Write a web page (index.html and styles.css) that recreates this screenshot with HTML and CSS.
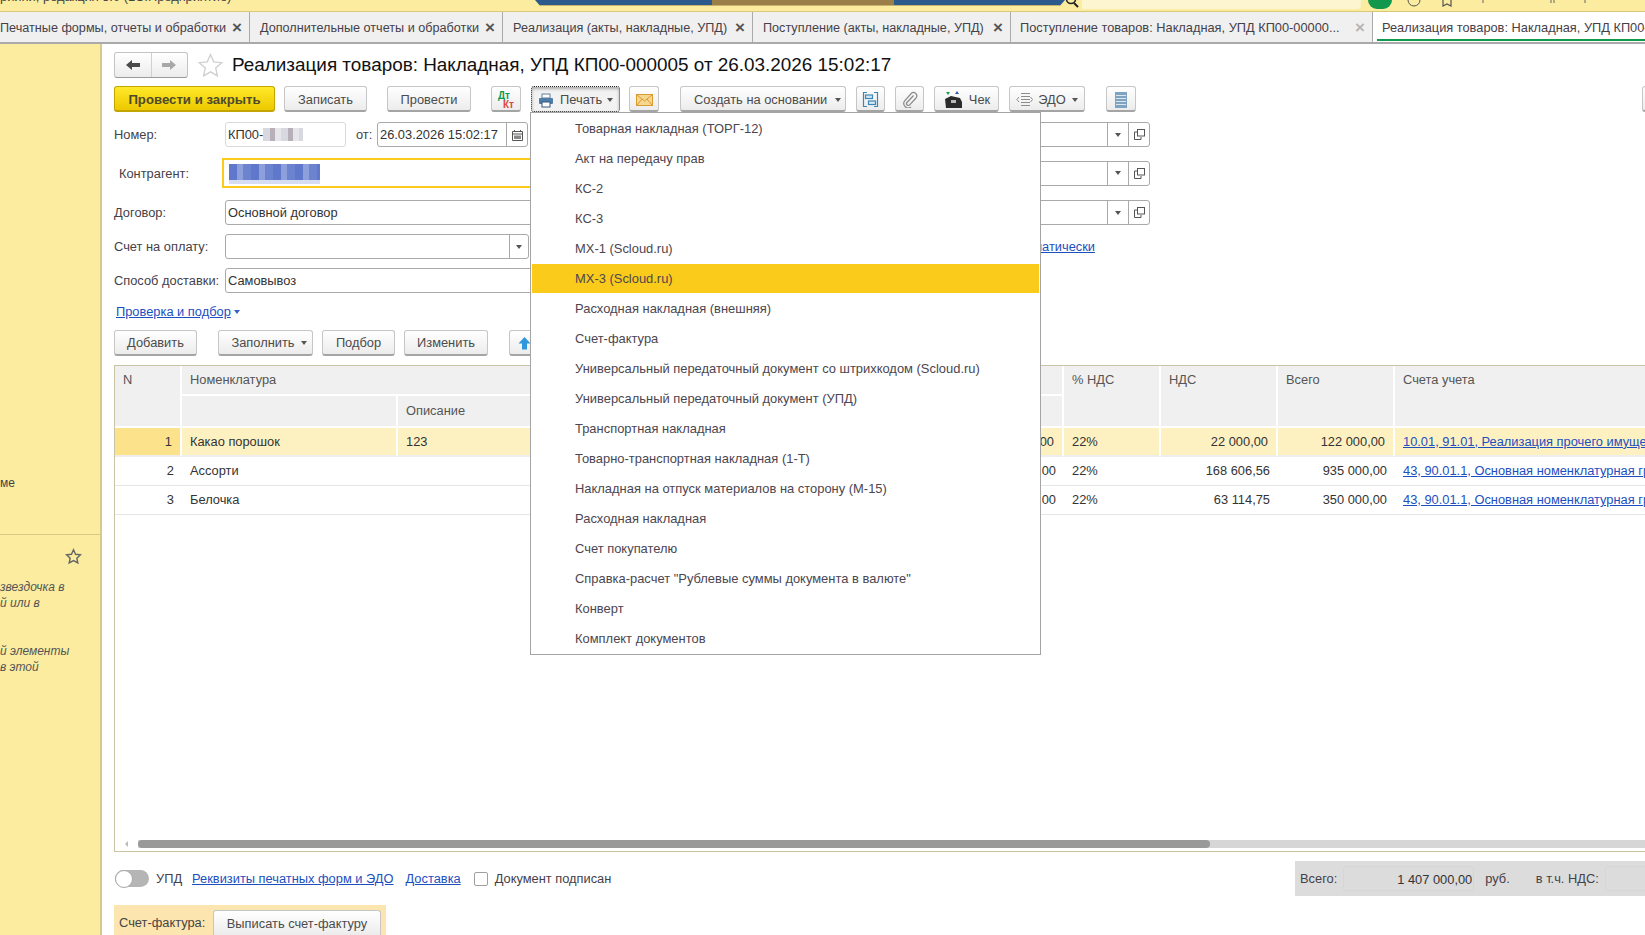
FILE: index.html
```html
<!DOCTYPE html>
<html lang="ru">
<head>
<meta charset="utf-8">
<title>Реализация товаров</title>
<link rel="stylesheet" href="styles.css">
</head>
<body>
<header class="topbar">
  <div class="app-title">рийни, редакция 3.0 (1С:Предприятие)</div>
  <div class="hub"><div class="hub-mid"></div></div>
  <svg class="mag" width="16" height="8" viewBox="0 0 16 8"><circle cx="6" cy="-1" r="4.5" fill="none" stroke="#222" stroke-width="1.6"/><path d="M9 3l4 4" stroke="#222" stroke-width="2"/></svg>
  <div class="search"><span class="search-text">Поиск Ctrl+Shift+F</span></div>
  <div class="top-icons">
    <span class="green-dot"></span>
    <svg width="14" height="8" viewBox="0 0 14 8"><circle cx="7" cy="0" r="6" fill="none" stroke="#555"/></svg>
    <svg width="14" height="8" viewBox="0 0 14 8"><path d="M3 0v6l4-2 4 2V0" fill="none" stroke="#555" stroke-width="1.2"/></svg>
    <svg class="tick" width="4" height="4" viewBox="0 0 4 4"><path d="M2 0v3" stroke="#666"/></svg>
    <svg class="tick2" width="6" height="4" viewBox="0 0 6 4"><path d="M1 0v3M4 0v3" stroke="#666"/></svg>
    <svg class="tick" width="4" height="4" viewBox="0 0 4 4"><path d="M2 0v3" stroke="#666"/></svg>
  </div>
</header>

<nav class="tabs">
  <div class="tab w1"><span class="tab-text">Печатные формы, отчеты и обработки</span><span class="x">×</span></div>
  <div class="tab w2"><span class="tab-text">Дополнительные отчеты и обработки</span><span class="x">×</span></div>
  <div class="tab w3"><span class="tab-text">Реализация (акты, накладные, УПД)</span><span class="x">×</span></div>
  <div class="tab w4"><span class="tab-text">Поступление (акты, накладные, УПД)</span><span class="x">×</span></div>
  <div class="tab w5"><span class="tab-text">Поступление товаров: Накладная, УПД КП00-00000...</span><span class="x faint">×</span></div>
  <div class="tab active"><span class="tab-text">Реализация товаров: Накладная, УПД КП00-000005 от 26.03.2026 15:02:17</span></div>
</nav>

<div class="main">
  <aside class="side">
    <div class="side-top"><span class="side-frag">ме</span></div>
    <div class="side-bottom">
      <svg class="side-star" width="17" height="17" viewBox="0 0 24 24"><path d="M12 2.500l2.900 6.300 6.900.8-5.100 4.700 1.400 6.800-6.100-3.400-6.100 3.400 1.400-6.800-5.100-4.700 6.900-.8z" fill="none" stroke="#666" stroke-width="2"/></svg>
      <p class="side-note">звездочка в<br>й или в</p>
      <p class="side-note">й элементы<br>в этой</p>
    </div>
  </aside>

  <section class="content">
    <div class="title-row">
      <div class="nav-group">
        <span class="nav-btn"><svg width="16" height="12" viewBox="0 0 16 12"><path d="M1 6l6-5v3h8v4H7v3z" fill="#4a4a4a"/></svg></span>
        <span class="nav-btn"><svg width="16" height="12" viewBox="0 0 16 12"><path d="M15 6L9 1v3H1v4h8v3z" fill="#a8a8a8"/></svg></span>
      </div>
      <svg class="title-star" width="25" height="25" viewBox="0 0 24 24"><path d="M12 1.500l3.100 7 7.600.8-5.700 5.100 1.600 7.500L12 18.100l-6.600 3.800L7 14.400 1.300 9.300l7.600-.8z" fill="#fff" stroke="#cfcfcf" stroke-width="1.300"/></svg>
      <h1 class="title">Реализация товаров: Накладная, УПД КП00-000005 от 26.03.2026 15:02:17</h1>
    </div>

    <div class="toolbar">
      <button class="btn primary w-post">Провести и закрыть</button>
      <button class="btn w-save">Записать</button>
      <button class="btn w-do ml20">Провести</button>
      <button class="btn icon w-dt ml20"><span class="dt">Дт</span><span class="kt">Кт</span></button>
      <button class="btn pressed w-print">
        <svg width="16" height="15" viewBox="0 0 16 15"><rect x="4" y="1" width="8" height="4" fill="#fff" stroke="#5f7f9f"/><rect x="1" y="5" width="14" height="6" rx="1" fill="#4e7ea8"/><rect x="4" y="9" width="8" height="5" fill="#fff" stroke="#35577a"/></svg>
        <span>Печать</span><i class="caret"></i>
      </button>
      <button class="btn icon w-mail"><svg width="17" height="12" viewBox="0 0 17 12"><rect x=".5" y=".5" width="16" height="11" fill="#f5d790" stroke="#dd9a2e"/><path d="M1 1l7.500 6L16 1M1 11l5-6M16 11l-5-6" fill="none" stroke="#dd9a2e"/></svg></button>
      <button class="btn w-create ml21">Создать на основании<i class="caret"></i></button>
      <button class="btn icon w-ico"><svg width="17" height="17" viewBox="0 0 17 17" fill="none" stroke="#3d86b8" stroke-width="1.200"><path d="M5 1.500H1.500v14H5M12 1.500h3.500v14H12"/><rect x="3.500" y="4" width="7" height="3.500" fill="#d6e8f3"/><rect x="6.500" y="10" width="7" height="3.500" fill="#d6e8f3"/></svg></button>
      <button class="btn icon w-ico"><svg width="16" height="17" viewBox="0 0 16 17" fill="none" stroke="#8a8a8a" stroke-width="1.200"><path d="M11.500 4.500L5 11.500a1.800 1.800 0 0 0 2.700 2.400L14 7a3.300 3.300 0 0 0-4.800-4.500L2.500 10a4.500 4.500 0 0 0 6.500 6"/></svg></button>
      <button class="btn w-check"><svg width="20" height="18" viewBox="0 0 20 18"><path d="M3 1l4 0-2 3z" fill="#1f9e4b"/><path d="M12 3l2-3 2 3z" fill="#3456b0"/><path d="M2 8l6-3 9 2 2 4v6H3z" fill="#2b2b2b"/><rect x="8" y="9" width="5" height="3" fill="#bbb"/></svg><span>Чек</span></button>
      <button class="btn w-edo"><svg width="17" height="15" viewBox="0 0 17 15" fill="none" stroke="#8c8c8c"><path d="M5 1.500h9M5 4.500h9M5 7.500h9M5 10.500h9M5 13.500h9M3 5L.8 7.500 3 10M14.500 5l2 2.500-2 2.500"/></svg><span>ЭДО</span><i class="caret"></i></button>
      <button class="btn icon w-list"><svg width="12" height="16" viewBox="0 0 12 16"><rect width="12" height="16" fill="#7fa3c0"/><path d="M1 3.500h10M1 6.500h10M1 9.500h10M1 12.500h10" stroke="#dbe7f0" stroke-width="1.200"/></svg></button>
      <button class="btn w-end"></button>
    </div>

    <div class="form">
      <div class="row r-number">
        <label class="lbl">Номер:</label>
        <div class="field soft w-num">КП00-<span class="pix"></span></div>
        <label class="lbl-from">от:</label>
        <div class="field w-date"><span class="f-text">26.03.2026 15:02:17</span><span class="f-btn"><svg width="11" height="12" viewBox="0 0 11 12"><path d="M.5 2.500h10v9H.5zM.5 5h10M2.500 1v2M8.500 1v2" fill="none" stroke="#555"/><path d="M2 6.500h7v3.500H2z" fill="#888"/></svg></span></div>
        <div class="field right-field"><span class="f-text"></span><span class="f-btn"><i class="tri"></i></span><span class="f-btn"><svg class="open" width="11" height="11" viewBox="0 0 11 11" fill="none" stroke="#555"><rect x="3.500" y=".5" width="7" height="6.500"/><path d="M3 3H.5v7.500H7V8"/></svg></span></div>
      </div>
      <div class="row r-contr">
        <label class="lbl lbl-in">Контрагент:</label>
        <div class="field focus w-long"><span class="pix-sel"></span></div>
        <div class="field right-field"><span class="f-text"></span><span class="f-btn"><i class="tri"></i></span><span class="f-btn"><svg class="open" width="11" height="11" viewBox="0 0 11 11" fill="none" stroke="#555"><rect x="3.500" y=".5" width="7" height="6.500"/><path d="M3 3H.5v7.500H7V8"/></svg></span></div>
      </div>
      <div class="row r-dog">
        <label class="lbl">Договор:</label>
        <div class="field w-long">Основной договор</div>
        <div class="field right-field"><span class="f-text"></span><span class="f-btn"><i class="tri"></i></span><span class="f-btn"><svg class="open" width="11" height="11" viewBox="0 0 11 11" fill="none" stroke="#555"><rect x="3.500" y=".5" width="7" height="6.500"/><path d="M3 3H.5v7.500H7V8"/></svg></span></div>
      </div>
      <div class="row r-pay">
        <label class="lbl">Счет на оплату:</label>
        <div class="field w-pay"><span class="f-text"></span><span class="f-btn wide"><i class="tri"></i></span></div>
        <a class="link auto-link">Автоматически</a>
      </div>
      <div class="row r-del">
        <label class="lbl">Способ доставки:</label>
        <div class="field w-long">Самовывоз</div>
      </div>
      <div class="check-link"><a class="link">Проверка и подбор</a><i class="caret blue"></i></div>
    </div>

    <div class="table-bar">
      <button class="btn w-add">Добавить</button>
      <button class="btn w-fill">Заполнить<i class="caret"></i></button>
      <button class="btn w-pick">Подбор</button>
      <button class="btn w-edit">Изменить</button>
      <button class="btn w-up"><svg width="13" height="14" viewBox="0 0 13 14"><path d="M6.500 1L12.500 7.500H9V13.500H4V7.500H.5z" fill="#2f95dc"/></svg></button>
    </div>

    <div class="table-wrap">
      <div class="grid">
        <div class="th h-n">N</div>
        <div class="th h-name">Номенклатура</div>
        <div class="th h-vat">% НДС</div>
        <div class="th h-vats">НДС</div>
        <div class="th h-tot">Всего</div>
        <div class="th h-acc">Счета учета</div>
        <div class="th h-blank"></div>
        <div class="th h-desc">Описание</div>

        <div class="td num sel-n">1</div><div class="td sel">Какао порошок</div><div class="td sel">123</div><div class="td sel right">100 000,00</div><div class="td sel">22%</div><div class="td sel right">22 000,00</div><div class="td sel right">122 000,00</div><div class="td sel"><a class="link">10.01, 91.01, Реализация прочего имущества, Основная номенклатурная группа</a></div>
        <div class="td num">2</div><div class="td">Ассорти</div><div class="td"></div><div class="td right">766 393,00</div><div class="td">22%</div><div class="td right">168 606,56</div><div class="td right">935 000,00</div><div class="td"><a class="link">43, 90.01.1, Основная номенклатурная группа, Без НДС</a></div>
        <div class="td num">3</div><div class="td">Белочка</div><div class="td"></div><div class="td right">286 885,00</div><div class="td">22%</div><div class="td right">63 114,75</div><div class="td right">350 000,00</div><div class="td"><a class="link">43, 90.01.1, Основная номенклатурная группа, Без НДС</a></div>
      </div>
      <div class="scroll"><i class="scroll-arrow"></i><div class="thumb"></div></div>
    </div>

    <div class="bottom">
      <span class="toggle"><i class="knob"></i></span>
      <span class="upd">УПД</span>
      <a class="link req">Реквизиты печатных форм и ЭДО</a>
      <a class="link del">Доставка</a>
      <span class="box"></span>
      <span class="signed">Документ подписан</span>
      <div class="totals">
        <span>Всего:</span><span class="t-field">1 407 000,00</span><span class="rub">руб.</span><span class="incl">в т.ч. НДС:</span><span class="t-field short"></span>
      </div>
    </div>
    <div class="invoice"><span class="inv-label">Счет-фактура:</span><button class="btn w-inv">Выписать счет-фактуру</button></div>
  </section>
</div>

<div class="popup">
  <div class="item">Товарная накладная (ТОРГ-12)</div>
  <div class="item">Акт на передачу прав</div>
  <div class="item">КС-2</div>
  <div class="item">КС-3</div>
  <div class="item">МХ-1 (Scloud.ru)</div>
  <div class="item hot">МХ-3 (Scloud.ru)</div>
  <div class="item">Расходная накладная (внешняя)</div>
  <div class="item">Счет-фактура</div>
  <div class="item">Универсальный передаточный документ со штрихкодом (Scloud.ru)</div>
  <div class="item">Универсальный передаточный документ (УПД)</div>
  <div class="item">Транспортная накладная</div>
  <div class="item">Товарно-транспортная накладная (1-Т)</div>
  <div class="item">Накладная на отпуск материалов на сторону (М-15)</div>
  <div class="item">Расходная накладная</div>
  <div class="item">Счет покупателю</div>
  <div class="item">Справка-расчет "Рублевые суммы документа в валюте"</div>
  <div class="item">Конверт</div>
  <div class="item">Комплект документов</div>
</div>
</body>
</html>
```
FILE: styles.css
```css
* { box-sizing: border-box; }
html, body { margin: 0; height: 100%; }
body {
  width: 1645px; height: 935px; overflow: hidden; position: relative;
  display: flex; flex-direction: column;
  font: 12.85px/16px "Liberation Sans", Arial, sans-serif;
  color: #464149; background: #fff;
}
button { font: inherit; color: inherit; }

/* top bar */
.topbar {
  height: 12px; flex: none; background: #fbeca0; border-bottom: 1px solid #d8c878;
  display: flex; align-items: flex-start; overflow: hidden;
}
.app-title { width: 535px; flex: none; margin-top: -11px; white-space: nowrap; overflow: hidden; direction: rtl; text-align: left; padding-right: 286px; color: #444; }
.hub { width: 530px; height: 6px; flex: none; background: #2c5a8c; border-bottom: 1px solid #c9b26a; clip-path: polygon(0 0, 100% 0, 99% 100%, 1% 100%); display: flex; justify-content: center; }
.hub-mid { width: 182px; height: 5px; background: #9a7f48; margin-left: 6px; }
.mag { flex: none; }
.search { width: 279px; height: 9px; flex: none; margin-left: 1px; padding-left: 3px; background: #fdf5d0; border-radius: 0 0 4px 0; color: #aaa; overflow: hidden; font-size: 12px; }
.search-text { display: block; margin-top: -12px; }
.top-icons { display: flex; align-items: flex-start; gap: 19px; margin-left: 7px; }
.green-dot { width: 24px; height: 9px; margin-right: -4px; background: #11984c; border-radius: 0 0 12px 12px; flex: none; }
.tick { margin-left: 8px; }
.tick2 { margin-left: 46px; }

/* tabs */
.tabs { height: 32px; flex: none; display: flex; background: #f0f0f0; border-bottom: 2px solid #aaa; overflow: hidden; font-size: 12.65px; }
.tab { flex: none; display: flex; align-items: center; justify-content: space-between; padding: 1px 7px 0 0; border-right: 1px solid #aaa; white-space: nowrap; position: relative; }
.w1 { width: 250px; }
.w2 { width: 253px; padding-left: 10px; }
.w3 { width: 250px; padding-left: 10px; }
.w4 { width: 258px; padding-left: 10px; }
.w5 { width: 362px; padding-left: 9px; font-size: 12.8px; }
.x { font-size: 17px; font-weight: bold; color: #555; }
.x.faint { color: #b5b5b5; }
.active { flex: 1; min-width: 0; background: #fff; border: 0; padding: 1px 0 0 9px; overflow: hidden; font-size: 12.8px; }
.active::after { content: ""; position: absolute; left: 4px; right: 0; bottom: 1px; height: 2px; background: #0f9a4c; }

/* layout */
.main { flex: 1; min-height: 0; display: flex; }
.side { width: 102px; flex: none; background: #fbeca0; border-right: 2px solid #d6c98a; display: flex; flex-direction: column; overflow: hidden; font-size: 12px; }
.side-top { height: 491px; flex: none; border-bottom: 1px solid #d6c98a; padding-top: 431px; }
.side-frag { display: block; line-height: 16px; color: #444; }
.side-bottom { flex: 1; display: flex; flex-direction: column; position: relative; padding-top: 44px; }
.side-star { position: absolute; left: 65px; top: 13px; }
.side-note { margin: 0 0 32px; font-style: italic; line-height: 16px; color: #555; }

.content { flex: 1; min-width: 0; display: flex; flex-direction: column; padding-left: 12px; overflow: hidden; }

/* title */
.title-row { height: 42px; flex: none; display: flex; align-items: center; }
.nav-group { display: flex; width: 74px; height: 26px; border: 1px solid #c4c4c4; border-bottom-color: #999; border-radius: 3px; background: linear-gradient(#fff, #ececec); flex: none; }
.nav-btn { flex: 1; display: flex; align-items: center; justify-content: center; }
.nav-btn + .nav-btn { border-left: 1px solid #d0d0d0; }
.title-star { margin-left: 10px; flex: none; }
.title { margin: 0 0 0 9px; font-size: 18.9px; font-weight: normal; line-height: 24px; color: #111; white-space: nowrap; }

/* toolbar */
.toolbar { height: 26px; flex: none; display: flex; gap: 9px; }
.btn {
  height: 26px; padding: 1px 0 0; flex: none; display: inline-flex; align-items: center; justify-content: center; gap: 5px;
  border: 1px solid #c6c6c6; border-bottom: 2px solid #a4a4a4; border-radius: 3px;
  background: linear-gradient(#fff, #ececec); color: #4b4b4b; white-space: nowrap;
}
.toolbar .btn { padding-top: 2px; }
.toolbar .w-dt { padding-top: 3px; }
.primary { background: linear-gradient(#ffe92a, #edc900); border-color: #c2a500; font-weight: bold; font-size: 13.2px; color: #4e4a2a; }
.pressed { border: 1px dotted #222; box-shadow: inset 0 2px 3px #aaa; background: #f2f2f2; }
.w-post { width: 161px; }
.w-save { width: 83px; }
.w-do { width: 84px; }
.ml20 { margin-left: 11px; }
.ml21 { margin-left: 12px; }
.w-dt { width: 30px; display: block; font-size: 10px; font-weight: bold; line-height: 9px; text-align: left; padding: 3px 0 0 6px; }
.dt { display: block; color: #0a9a4b; }
.kt { display: block; color: #e0473c; margin-left: 5px; }
.w-print { width: 89px; margin-left: 1px; justify-content: flex-start; padding-left: 6px; gap: 4px; }
.w-print span { margin-left: 2px; }
.w-mail { width: 30px; }
.w-create { width: 166px; justify-content: flex-start; padding-left: 13px; }
.w-create .caret { margin-left: 3px; }
.w-ico { width: 29px; margin-left: 1px; }
.w-check { width: 65px; margin-left: 1px; gap: 6px; }
.w-edo { width: 76px; margin-left: 1px; }
.w-list { width: 30px; margin-left: 12px; }
.w-end { width: 30px; margin-left: 497px; }
.caret { display: inline-block; width: 0; height: 0; margin-left: 1px; border: 3px solid transparent; border-top: 4px solid #555; border-bottom: 0; vertical-align: middle; }
.caret.blue { border-top-color: #3a62c4; margin-left: 3px; }

/* form */
.form { flex: none; padding-top: 10px; }
.row { display: flex; align-items: center; width: 1036px; }
.r-number { height: 25px; }
.r-contr { height: 30px; margin-top: 11px; }
.r-dog { height: 25px; margin-top: 12px; }
.r-pay { height: 25px; margin-top: 9px; width: 981px; }
.r-del { height: 25px; margin-top: 9px; }
.lbl { width: 111px; flex: none; }
.lbl-in { padding: 1px 0 0 5px; width: 108px; }
.lbl-from { margin: 0 5px 0 10px; width: 16px; flex: none; }
.field { height: 25px; display: flex; align-items: center; flex: none; border: 1px solid #a9a9a9; border-radius: 3px; background: #fff; padding-left: 2px; overflow: hidden; color: #333; }
.soft { border-color: #dadada; }
.w-num { width: 121px; }
.w-date { width: 151px; }
.w-long { width: 380px; }
.w-pay { width: 304px; }
.f-text { flex: 1; }
.f-btn { width: 21px; height: 100%; flex: none; display: flex; align-items: center; justify-content: center; border-left: 1px solid #a9a9a9; }
.f-btn.wide { width: 19px; }
.tri { width: 0; height: 0; border: 3px solid transparent; border-top: 4px solid #555; border-bottom: 0; }
.right-field { width: 150px; margin-left: auto; }
.focus { height: 30px; width: 384px; border: 2px solid #fbcb1c; border-radius: 0; padding-left: 5px; }
.pix { display: inline-block; width: 40px; height: 13px; background: repeating-linear-gradient(90deg, #d8d8e0 0 7px, #b8b0b8 7px 12px, #e6e6ea 12px 18px); }
.pix-sel { display: block; width: 91px; height: 20px; margin-top: 2px; background: repeating-linear-gradient(90deg, #5f78cc 0 8px, #8da0dc 8px 14px, #6c84d0 14px 22px); box-shadow: inset 0 -4px #d6dcf2; }
.link { color: #1c4fc0; text-decoration: underline; white-space: nowrap; }
.auto-link { margin-left: auto; }
.check-link { height: 16px; margin: 11px 0 0 2px; display: flex; align-items: center; }

/* table */
.table-bar { height: 26px; flex: none; margin-top: 10px; display: flex; gap: 9px; }
.w-add { width: 83px; }
.w-fill { width: 95px; margin-left: 12px; padding-left: 7px; }
.w-pick { width: 73px; }
.w-edit { width: 84px; }
.w-up { width: 40px; margin-left: 12px; justify-content: flex-start; padding-left: 8px; }

.table-wrap { flex: 1; min-height: 0; margin-top: 9px; display: flex; flex-direction: column; border: 1px solid #c9c5a4; border-right: 0; overflow: hidden; }
.grid { display: grid; flex: none; grid-template-columns: 67px 216px 571px 95px 97px 117px 117px 1fr; grid-template-rows: 30px 32px 29px 29px 29px; width: 1620px; }
.th { background: #f0f0f0; padding: 6px 8px; border-right: 2px solid #fff; border-bottom: 2px solid #fff; color: #555; white-space: nowrap; }
.h-n { grid-column: 1; grid-row: 1 / span 2; }
.h-name { grid-column: 2 / span 3; grid-row: 1; }
.h-vat { grid-column: 5; grid-row: 1 / span 2; }
.h-vats { grid-column: 6; grid-row: 1 / span 2; }
.h-tot { grid-column: 7; grid-row: 1 / span 2; }
.h-acc { grid-column: 8; grid-row: 1 / span 2; }
.h-blank { grid-column: 2; grid-row: 2; }
.h-desc { grid-column: 3 / span 2; grid-row: 2; padding-top: 7px; }
.td { padding: 0 8px; display: flex; align-items: center; border-bottom: 1px solid #e6e6e6; white-space: nowrap; color: #333; overflow: hidden; }
.num, .right { justify-content: flex-end; }
.sel { background: #fdf1c2; border-right: 2px solid #fff; border-bottom: 2px solid #eee; }
.sel-n { background: #fde28c; border-right: 2px solid #fff; border-bottom: 2px solid #eee; }
.scroll { margin-top: auto; height: 8px; margin-bottom: 3px; background: #d6d6d6; position: relative; margin-left: 23px; }
.scroll-arrow { position: absolute; left: -13px; top: 1px; width: 0; height: 0; border: 3px solid transparent; border-right: 3px solid #bbb; border-left: 0; }
.thumb { width: 1072px; height: 8px; background: #999; border-radius: 4px; }

/* bottom */
.bottom { height: 35px; flex: none; margin-top: 9px; display: flex; align-items: center; width: 1600px; }
.toggle { width: 34px; height: 17px; flex: none; border-radius: 9px; background: #b5b5b5; position: relative; margin-left: 1px; }
.knob { position: absolute; left: 0; top: 0; width: 18px; height: 18px; border-radius: 50%; background: #fff; border: 1px solid #a8a8a8; }
.upd { margin-left: 7px; }
.req { margin-left: 10px; }
.del { margin-left: 12px; }
.box { width: 14px; height: 14px; margin-left: 13px; flex: none; border: 1px solid #a0a0a0; border-radius: 2px; background: #fff; }
.signed { margin-left: 7px; }
.totals { margin-left: auto; width: 419px; flex: none; height: 35px; background: #dcdcdc; display: flex; align-items: center; padding-left: 5px; white-space: nowrap; }
.t-field { width: 131px; height: 25px; margin-left: 6px; flex: none; padding: 0 1px; text-align: right; line-height: 25px; border: 1px solid #d6d6d6; border-radius: 3px; color: #333; }
.t-field.short { width: 60px; }
.rub { margin-left: 11px; }
.incl { margin-left: 26px; }
.invoice { height: 30px; flex: none; margin-top: 9px; width: 272px; background: #fde5b0; display: flex; align-items: flex-end; justify-content: space-between; padding: 0 5px; color: #444; }
.inv-label { align-self: flex-start; margin-top: 10px; }
.w-inv { width: 168px; height: 25px; border-bottom: 0; border-radius: 3px 3px 0 0; }

/* popup */
.popup { position: absolute; left: 530px; top: 112px; width: 511px; height: 543px; background: #fff; border: 1px solid #a4a4a4; padding: 0 1px; font-size: 12.93px; }
.item { height: 30px; line-height: 29px; padding: 1px 0 0 43px; color: #4b4650; white-space: nowrap; }
.hot { background: #fbcb1c; height: 29px; margin-top: 1px; padding-top: 0; line-height: 29px; }
```
